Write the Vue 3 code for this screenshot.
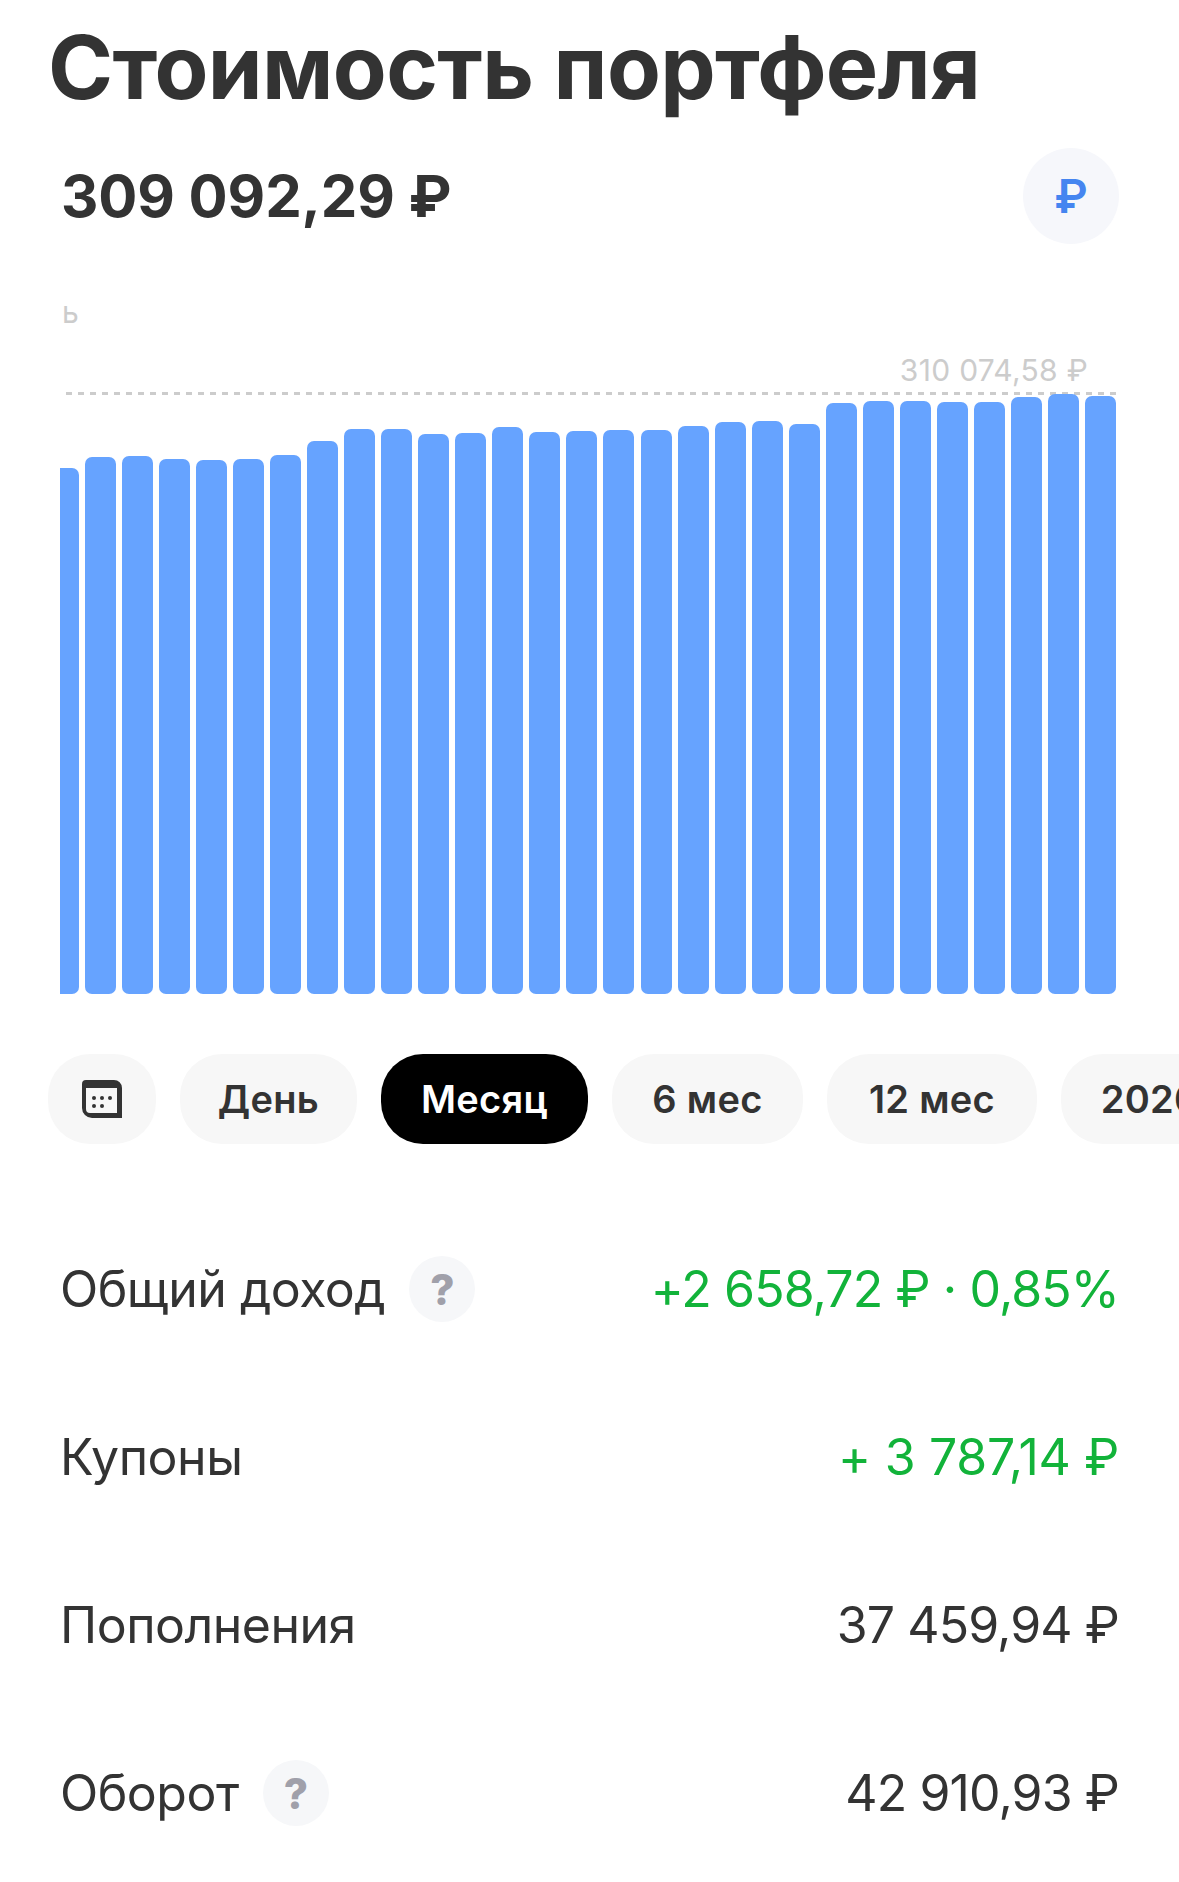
<template>
  <div class="page">
    <h1 class="title">Стоимость портфеля</h1>

    <div class="total-row">
      <div class="total">309 092,29 ₽</div>
      <button class="currency" type="button">₽</button>
    </div>

    <div class="chart">
      <div class="min-label">ь</div>
      <div class="max-label">310 074,58 ₽</div>
      <div class="max-line"></div>
      <div class="bars">
        <div
          v-for="(top, i) in barTops"
          :key="i"
          class="bar"
          :class="{ first: i === 0 }"
          :style="{ height: 994 - top + 'px' }"
        ></div>
      </div>
    </div>

    <div class="periods">
      <button class="pill pill-icon" type="button">
        <svg width="40" height="38" viewBox="0 0 40 38">
          <path
            fill="#333"
            fill-rule="evenodd"
            d="M4 0H32A8 8 0 0 1 40 8V38H10A10 10 0 0 1 0 28V4A4 4 0 0 1 4 0ZM4 8V29A4 4 0 0 0 8 33H35V8Z"
          />
          <circle v-for="d in dots" :key="d[0] + '-' + d[1]" :cx="d[0]" :cy="d[1]" r="2" fill="#333" />
        </svg>
      </button>
      <button
        v-for="p in periods"
        :key="p.label"
        class="pill"
        :class="{ active: p.label === 'Месяц' }"
        :style="{ width: p.width + 'px' }"
        type="button"
      >
        {{ p.label }}
      </button>
    </div>

    <div class="stats">
      <div v-for="row in rows" :key="row.label" class="stat">
        <div class="stat-label">
          {{ row.label }}
          <span v-if="row.help" class="help">?</span>
        </div>
        <div class="stat-value" :class="{ green: row.green, loose: row.loose }">{{ row.value }}</div>
      </div>
    </div>
  </div>
</template>

<script setup>
// top edge of every bar, read from the chart
const barTops = [
  468, 457, 456, 459, 460, 459, 455, 441, 429, 429, 434, 433, 427, 432, 431,
  430, 430, 426, 422, 421, 424, 403, 401, 401, 402, 402, 397, 394, 396,
];

const dots = [
  [12, 18], [20, 18], [28, 18],
  [12, 26], [20, 26],
];

const periods = [
  { label: "День", width: 177 },
  { label: "Месяц", width: 207 },
  { label: "6 мес", width: 191 },
  { label: "12 мес", width: 210 },
  { label: "2020", width: 178 },
];

const rows = [
  { label: "Общий доход", help: true, value: "+2 658,72 ₽ · 0,85%", green: true },
  { label: "Купоны", value: "+ 3 787,14 ₽", green: true, loose: true },
  { label: "Пополнения", value: "37 459,94 ₽" },
  { label: "Оборот", help: true, value: "42 910,93 ₽" },
];
</script>

<style>
html,
body {
  margin: 0;
  background: #fff;
  overflow: hidden;
}
</style>

<style scoped>
.page {
  width: 1179px;
  height: 1882px;
  overflow: hidden;
  font-family: Inter, "Noto Sans", sans-serif;
  color: #333;
}

.title {
  margin: 0;
  padding: 13px 0 0 48px;
  font-size: 88px;
  line-height: 108px;
  font-weight: 700;
  letter-spacing: -0.65px;
  white-space: nowrap;
}

.total-row {
  display: flex;
  justify-content: space-between;
  align-items: center;
  margin-top: 27px;
  padding: 0 60px 0 61px;
}

.total {
  font-size: 58px;
  font-weight: 700;
  letter-spacing: -0.1px;
}

.currency {
  width: 96px;
  height: 96px;
  padding: 0;
  border: 0;
  border-radius: 50%;
  background: #f6f7fb;
  color: #4585f0;
  font-family: inherit;
  font-size: 46px;
  font-weight: 600;
}

.chart {
  position: relative;
  margin: 0 63px 0 60px;
  height: 750px;
}

.min-label {
  position: absolute;
  left: 2px;
  top: 50px;
  font-size: 30px;
  color: #ccc;
}

.max-label {
  position: absolute;
  right: 28px;
  top: 108px;
  font-size: 30px;
  letter-spacing: 0.3px;
  color: #ccc;
}

.max-line {
  position: absolute;
  left: 6px;
  right: 0;
  top: 148px;
  height: 3px;
  background: repeating-linear-gradient(to right, #ccc 0 6px, transparent 6px 12px);
}

.bars {
  position: absolute;
  left: 0;
  right: 0;
  bottom: 0;
  display: flex;
  justify-content: space-between;
  align-items: flex-end;
}

.bar {
  width: 31px;
  background: #66a3ff;
  border-radius: 7px;
}

.bar.first {
  width: 19px;
  border-radius: 0 7px 7px 0;
}

.periods {
  display: flex;
  gap: 24px;
  margin-top: 60px;
  padding-left: 48px;
}

.pill {
  flex: none;
  height: 90px;
  padding: 0;
  border: 0;
  border-radius: 42px;
  background: #f7f7f7;
  color: #333;
  font-family: inherit;
  font-size: 38px;
  font-weight: 600;
  letter-spacing: 0.3px;
}

.pill.active {
  background: #000;
  color: #fff;
}

.pill-icon {
  display: flex;
  align-items: center;
  justify-content: center;
  width: 108px;
}

.stats {
  margin-top: 61px;
  padding: 0 60px 0 60px;
}

.stat {
  display: flex;
  justify-content: space-between;
  align-items: center;
  height: 168px;
  font-size: 50px;
  white-space: nowrap;
}

.stat-label {
  display: flex;
  align-items: center;
  gap: 24px;
  letter-spacing: -0.5px;
}

.stat-value {
  letter-spacing: -0.9px;
}

.stat-value.loose {
  letter-spacing: -0.3px;
}

.help {
  display: flex;
  align-items: center;
  justify-content: center;
  width: 66px;
  height: 66px;
  border-radius: 50%;
  background: #f6f7f9;
  color: #a0a0aa;
  font-size: 42px;
  font-weight: 800;
}

.green {
  color: #12b33a;
}
</style>
